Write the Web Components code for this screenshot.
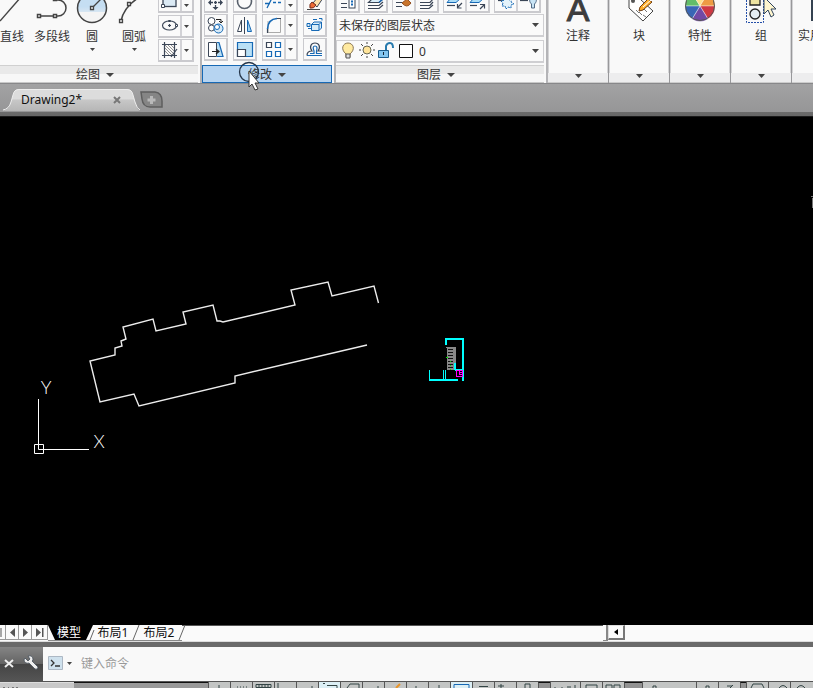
<!DOCTYPE html>
<html lang="zh-CN">
<head>
<meta charset="utf-8">
<title>Drawing2</title>
<style>
html,body{margin:0;height:100%}
body{background:#000;overflow:hidden;font:12px/16px "Noto Sans","Noto Sans CJK SC",sans-serif;color:#333}
</style>
</head>
<body>
<cad-app></cad-app>
<script>
const define=(name,html,setup)=>{
  const t=document.createElement('template');
  t.innerHTML='<style>*{box-sizing:border-box}svg{display:block}button{font:inherit;color:inherit;border:0;padding:0;margin:0;background:none}</style>'+html;
  customElements.define(name,class extends HTMLElement{
    constructor(){super();this.attachShadow({mode:'open'}).append(t.content.cloneNode(true));}
    connectedCallback(){if(setup)setup(this,this.shadowRoot);}
  });
};
const caret=(w,h)=>`<svg width="${w}" height="${h}" viewBox="0 0 ${w} ${h}" aria-hidden="true"><path d="M0 0H${w}L${w/2} ${h}Z" fill="#444"/></svg>`;
const S='fill="none" stroke="#3b4657" stroke-width="1.2"';
const B='fill="none" stroke="#1769b5" stroke-width="1.3"';
const icons={
line:'<path d="M0 21L21 -3" fill="none" stroke="#444" stroke-width="1.4"/>',
polyline:'<g fill="none" stroke="#444" stroke-width="1.5"><path d="M23 0H25A8 8 0 0 1 25 16H7"/><g fill="#fff"><path d="M4.500 14.500h3v3h-3zM20.500 14.500h3v3h-3zM20.500 -2.500h3v3h-3z"/></g></g>',
circle:'<defs><linearGradient id="g" x2="0" y2="1"><stop offset=".45" stop-color="#c5def2"/><stop offset=".62" stop-color="#d5e5f2"/><stop offset=".64" stop-color="#f4f4f4"/></linearGradient></defs><circle cx="16" cy="8" r="14.5" fill="url(#g)" stroke="#444" stroke-width="1.5"/><path d="M16 8L26 -2" stroke="#444" stroke-width="1.3"/><path d="M14.500 6.500h3v3h-3z" fill="#fff" stroke="#444" stroke-width="1.3"/>',
arc:'<path d="M3 21Q6 6 22 -3" fill="none" stroke="#444" stroke-width="1.5"/><path d="M1.500 19.500h3v3h-3zM9.500 2.500h3v3h-3z" fill="#fff" stroke="#444" stroke-width="1.3"/>',
rect:`<rect x="4" y="-3" width="13" height="9.500" fill="#dbeaf5" stroke="#3b4657" stroke-width="1.3"/><path d="M2.500 4.500h3v3h-3z" fill="#fff" stroke="#3b4657"/>`,
ellipse:`<ellipse cx="10.500" cy="9.500" rx="7" ry="4.500" ${S}/><path d="M9 9.500h3M10.500 8v3" ${S}/><path d="M16.500 8.500h2v2h-2zM9.500 4.500h2v1h-2z" fill="#fff" stroke="#3b4657"/>`,
hatch:`<path d="M5.500 2V18M15.500 2V18M3 4.500H18M3 15.500H18" ${S}/><path d="M6 5L15 14M9 5L15 11M6 8L13 15M6 11L10 15M12 5L15 8" stroke="#777" stroke-width=".8"/><path d="M12 17L18 9" ${S}/>`,
move:'<path d="M10.500 -3V9M5 2.500H17" stroke="#3b4657" stroke-width="1.3" stroke-dasharray="3 1"/><path d="M3 2.500l3-3v6zM18 2.500l-3-3v6zM10.500 10L7.500 7h6z" fill="#3b4657"/>',
rotate:'<circle cx="10.500" cy="1.500" r="7" fill="none" stroke="#59616c" stroke-width="1.6"/>',
trim:'<path d="M4 8L10 -4M2 3.500h5" fill="none" stroke="#1769b5" stroke-width="1.3"/><path d="M10 2.500h8" stroke="#1769b5" stroke-width="1.3" stroke-dasharray="3 2"/>',
erase:'<path d="M9 3L14 -3L19 -2L13 7Z" fill="#ffe1a8" stroke="#3b4657"/><path d="M6 8Q5 4 8 2L12 5Q10 9 6 8Z" fill="#ef6b33" stroke="#732d1d"/><path d="M3 9.500h13" stroke="#444"/>',
copy:'<circle cx="6.500" cy="6" r="3.500" fill="#fff" stroke="#3b4657"/><circle cx="6.500" cy="13" r="3" fill="#fff" stroke="#3b4657"/><circle cx="13.500" cy="13.500" r="4.500" fill="#d5e9f7" stroke="#1769b5"/><circle cx="12" cy="12" r="2.500" fill="#fff" stroke="#1769b5"/><path d="M11 4.500h5V7M14 6l2 2 2-2" fill="none" stroke="#222"/>',
mirror:'<path d="M7.500 5V16.500H3.500Z" fill="#fff" stroke="#3b4657"/><path d="M13.500 5V16.500H17.500Z" fill="#9ed1ef" stroke="#1769b5"/><path d="M10.500 2V19" stroke="#3b4657"/>',
fillet:'<path d="M5 6V17.500H17.500V4" fill="none" stroke="#aaa"/><path d="M4.500 18V14M14 3.500H18" stroke="#3b4657" stroke-width="1.2"/><path d="M4.500 14Q5 4 14 3.500" fill="none" stroke="#1769b5" stroke-width="1.6"/>',
explode:'<g fill="#d9edf8" stroke="#1769b5"><path d="M7.500 9.500L10 7H17.500V13L15 15.500H7.500ZM7.500 9.500H15V15.500M15 9.500L17.500 7M3 8.500h3v3H3zM4 13.500h3M9 4.500h4M15 3.500h3v2"/></g>',
stretch:'<path d="M11.500 3.500V17.500H3.500V3.500Z" fill="#fff" stroke="#3b4657"/><path d="M12 3.500H14L18 17.500H12" fill="#b8def4" stroke="#1769b5" stroke-width="1.2"/><path d="M7 12.500h6M11 10l3 2.500-3 2.500" fill="none" stroke="#222" stroke-width="1.2"/>',
scale:'<path d="M3.500 3.500H18.500V17.500H3.500Z" fill="#b9e0f5" stroke="#1769b5" stroke-width="1.2"/><path d="M3.500 10.500H11.500V17.500H3.500Z" fill="#fff" stroke="#3b4657" stroke-width="1.2"/>',
array:'<g fill="#fff" stroke-width="1.2"><path d="M3.500 3.500h5v5h-5z" stroke="#3b4657"/><path d="M12.500 3.500h5v5h-5zM3.500 12.500h5v5h-5zM12.500 12.500h5v5h-5z" stroke="#1769b5"/></g>',
offset:'<path d="M3 16.500C3 13 5 12 8 12C5 8 7 4 11 4S17 8 14 12H18" fill="none" stroke="#3b4657" stroke-width="1.2"/><path d="M3 16.500H18M6 14.500H10V12Q8 7 11 7T12.500 12V14.500H18" fill="none" stroke="#1769b5" stroke-width="1.2"/>',
lprops:`<path d="M3 -1h7M4 3.500h6M4 7.500h6" ${S}/><rect x="12" y="-3" width="6" height="11" fill="#fff" stroke="#3b4657"/><path d="M14 1.500h2M14 4.500h2" stroke="#1769b5" stroke-width="2"/>`,
layers:`<path d="M7 -1H18L14 2.500H3.500Z" fill="#d7ecf8" ${S}/><path d="M3 5.500H14L18 2M3 8.500H14L18 5" ${S}/><path d="M7 -1H18L14 2.500" ${B}/>`,
lbrush:`<path d="M4 -1H10M3 2.500h6M3 6.500h6" ${S}/><path d="M9 3L14 -1L18 3Q14 9 9 3Z" fill="#c9752c" stroke="#945123"/>`,
lgrey:`<path d="M7 -1H17L14 2.500H4M4 5.500H14L17 2M4 8.500H13L17 5" ${S}/>`,
ldown:`<path d="M7 -2H17L12 2.500H3Z" fill="#a9dcf6" stroke="#1769b5"/><path d="M3 5.500H11" ${S}/><path d="M18 3l-4 4M13.500 4v4h4" ${S}/>`,
lup:`<path d="M7 -2H17L12 2.500H3Z" fill="#a9dcf6" stroke="#1769b5"/><path d="M3 5.500H10" ${S}/><path d="M13 9l4-4M13 4.500h4.500v4" ${S}/>`,
freeze:`<path d="M3 .5h6" ${S}/><path d="M12 -3l2 3 3-1-1 3 3 2-3 1v3l-3-1-2 2-1-3-3 0 1-3-2-2 4-1z" fill="#e4f3fb" stroke="#1769b5" stroke-dasharray="2 1"/>`,
loff:`<path d="M2 .5h8" ${S}/><path d="M13.500 8V4C10 1 12 -4 15 -4S20 1 16.500 4V8Z" fill="#c8e4f5" stroke="#536b85"/>`
};
define('tool-icon',`<style>:host{display:block;flex:none}svg{overflow:hidden}</style><svg aria-hidden="true"></svg>`,(h,r)=>{
 const w=h.getAttribute('w')||22,g=h.getAttribute('h')||22,s=r.querySelector('svg');
 s.setAttribute('width',w);s.setAttribute('height',g);s.setAttribute('viewBox',`0 0 ${w} ${g}`);s.innerHTML=icons[h.getAttribute('name')]||'';
});
define('tool-button',`<style>:host{display:block}div{display:flex;height:23px;border:1px solid #cacace;background:#fafafa;border-width:1px 2px 2px 1px}:host([top]) div{height:13px;border-top:0}button{height:100%;width:21px;overflow:hidden}.more{display:none;width:11px;border-left:2px solid #d2d2d6;place-items:center}:host([split]) .more{display:grid}:host([pair]) .more{width:23px;display:block}</style><div><button class="main"><tool-icon></tool-icon></button><button class="more" aria-label="更多">${caret(5,3)}</button></div>`,(h,r)=>{
 const n=h.getAttribute('name'),g=h.hasAttribute('top')?11:20;
 const ic=k=>`<tool-icon name="${k}" w="21" h="${g}"></tool-icon>`;
 const m=r.querySelector('.main');m.innerHTML=ic(n);m.setAttribute('aria-label',n);
 if(h.hasAttribute('pair'))r.querySelector('.more').innerHTML=ic(h.getAttribute('pair'));
});
define('large-tool',`<style>:host{display:block;flex:none}button{display:flex;flex-direction:column;align-items:center;width:100%;height:56px;white-space:nowrap}span{margin-top:5px;height:16px}.c{margin-top:3px;display:none}:host([menu]) .c{display:block}</style><button><tool-icon></tool-icon><span><slot></slot></span><i class="c">${caret(5,3)}</i></button>`,(h,r)=>{
 r.querySelector('button').firstElementChild.outerHTML=`<tool-icon name="${h.getAttribute('name')}" w="${h.getAttribute('w')||32}" h="24"></tool-icon>`;
});
define('ribbon-panel',`<style>:host{display:flex;flex-direction:column;height:83px;flex:none;padding-right:2px;border-right:2px solid #b4b4b7}.body{height:65px;overflow:hidden}.title{height:18px;width:100%;padding:2px 8px 0 0;display:flex;align-items:center;justify-content:center;gap:6px;border-top:1px solid #d0d0d0;border-bottom:1px solid #c8c8c8;background:linear-gradient(#e9e9e9 50%,#f7f7f7 50%)}:host([active]) .title{padding-right:0;border:1px solid #1769b5;background:#b6d4f1}</style><div class="body"><slot></slot></div><button class="title"><slot name="title"></slot>${caret(8,4)}</button>`);
define('compact-panel',`<style>:host{display:flex;width:61px;flex:none;height:83px;border-right:1px solid #98989b;box-shadow:inset -1px 0 #d4d4d6,inset 1px 0 #d4d4d6}button{width:100%;display:flex;flex-direction:column;align-items:center;white-space:nowrap}svg{flex:none;overflow:hidden}span{margin-top:4px}.foot{margin-top:auto;align-self:stretch;height:10px;background:#ededee;border-bottom:1px solid #ccc;display:flex;justify-content:center;padding-top:1px}</style><button><slot name="icon"></slot><span><slot></slot></span><div class="foot">${caret(7,4)}</div></button>`);
define('layer-select',`<style>:host{display:flex;align-items:center;height:23px;border:1px solid #cfcfd2;border-bottom-width:2px;background:#fafafa;padding-left:1px;padding-right:4px}select{appearance:none;border:0;background:none;font:inherit;color:#333;padding:2px 0 0 1px;margin:0;flex:1;min-width:0;height:20px;outline:0}svg{flex:none}</style><slot></slot><select></select>${caret(7,4)}`,(h,r)=>{
 const s=r.querySelector('select');s.setAttribute('aria-label',h.getAttribute('label'));s.add(new Option(h.getAttribute('value')));
});
define('cad-ribbon',`<style>
:host{display:flex;height:84px;background:#f9f9f9;border-bottom:1px solid #88888a;overflow:hidden;flex:none}
.draw{display:flex;width:198px}.grid{display:grid;gap:1px 5px;align-content:start}.draw .grid{margin-left:auto;margin-right:4px;width:36px}
.mod{grid-template-columns:24px 24px 36px 24px;padding:0 0 0 2px;width:130px}
.layer{width:208px}.row{display:flex;gap:4px;height:14px}
.row tool-button{width:24px}.row tool-button[pair]{width:47px}layer-select+layer-select{margin-top:3px}
large-tool{width:48px}.l{width:24px}.p{width:56px}.c{width:24px}
</style>
<ribbon-panel><span slot="title">绘图</span><div class="draw">
<large-tool class="l" name="line" w="24">直线</large-tool><large-tool class="p" name="polyline" w="38">多段线</large-tool><large-tool class="c" name="circle" menu>圆</large-tool><large-tool style="width:60px" name="arc" w="32" menu>圆弧</large-tool>
<div class="grid" style="margin-left:-6px"><tool-button top split name="rect"></tool-button><tool-button split name="ellipse" style="margin-top:1px"></tool-button><tool-button split name="hatch"></tool-button></div></div></ribbon-panel>
<ribbon-panel active><span slot="title">修改</span><div class="grid mod">
<tool-button top name="move"></tool-button><tool-button top name="rotate"></tool-button><tool-button top split name="trim"></tool-button><tool-button top name="erase"></tool-button>
<tool-button name="copy"></tool-button><tool-button name="mirror"></tool-button><tool-button split name="fillet"></tool-button><tool-button name="explode"></tool-button>
<tool-button name="stretch"></tool-button><tool-button name="scale"></tool-button><tool-button split name="array"></tool-button><tool-button name="offset"></tool-button></div></ribbon-panel>
<ribbon-panel><span slot="title">图层</span><div class="layer"><div class="row"><tool-button top name="lprops"></tool-button><tool-button top name="layers"></tool-button><tool-button top name="lbrush" pair="lgrey"></tool-button><tool-button top name="ldown" pair="lup"></tool-button><tool-button top name="freeze" pair="loff"></tool-button></div>
<layer-select label="图层状态" value="未保存的图层状态"></layer-select>
<layer-select label="图层" value="0"><svg width="80" height="20" viewBox="0 0 80 20" aria-hidden="true"><path d="M8 13C2 8 5 2 10 2S18 8 12 13V16H8Z" fill="#ffeaa0" stroke="#8a7753"/><path d="M8 13h4v4H8z" fill="#ddd" stroke="#555"/><circle cx="29" cy="9" r="4" fill="#ffe49a" stroke="#665"/><path d="M29 1v2M29 15v2M21 9h2M35 9h2M23 3l2 2M33 13l2 2M35 3l-2 2M23 15l2-2" stroke="#444"/><path d="M40.500 9.500h10v7h-10z" fill="#83c5ef" stroke="#1a5b8b"/><path d="M48 9V5Q49 2 52 2T55 7" fill="none" stroke="#287aad" stroke-width="2"/><path d="M45.500 11v3" stroke="#123"/><path d="M61.500 3.500h13v13h-13z" fill="#fff" stroke="#111"/></svg></layer-select></div></ribbon-panel>
<compact-panel><svg slot="icon" width="32" height="24" viewBox="0 0 32 24"><text x="16" y="21" text-anchor="middle" font-family="Liberation Sans,sans-serif" font-size="34" fill="#3d3d3d" stroke="#3d3d3d">A</text></svg>注释</compact-panel>
<compact-panel><svg slot="icon" width="32" height="24" viewBox="0 0 32 24"><path d="M6 -1H17L30 11L20 21L6 8Z" fill="#fff" stroke="#444"/><circle cx="10" cy="1" r="2" fill="#555"/><path d="M13 10l3 3M16 12l3 3M20 15l3 2M21 9l3 3" stroke="#777"/><path d="M17 7L25 -1L29 2L20 10L16 11Z" fill="#ffb02d" stroke="#6f3d13"/><path d="M20 7L28 0" stroke="#fff"/></svg>块</compact-panel>
<compact-panel><svg slot="icon" width="32" height="24" viewBox="0 0 32 24"><g stroke="#fff" stroke-width=".4"><path d="M16 6L1 6A15 15 0 0 1 8 -7Z" fill="#62bd69"/><path d="M16 6L8 -7A15 15 0 0 1 24 -7Z" fill="#ffe38c"/><path d="M16 6L24 -7A15 15 0 0 1 31 6Z" fill="#ee9b43"/><path d="M16 6H31A15 15 0 0 1 24 19Z" fill="#cf3943"/><path d="M16 6L24 19A15 15 0 0 1 8 19Z" fill="#7249a5"/><path d="M16 6L8 19A15 15 0 0 1 1 6Z" fill="#3966b5"/></g><circle cx="16" cy="6" r="14.500" fill="none" stroke="#555"/></svg>特性</compact-panel>
<compact-panel><svg slot="icon" width="32" height="24" viewBox="0 0 32 24"><path d="M1.500 0V22.500H18.500V0" fill="none" stroke="#244fa8" stroke-dasharray="2 1"/><path d="M5 -5h10V5H5z" fill="#eee3a0" stroke="#222" stroke-width="1.300"/><circle cx="10" cy="14" r="5" fill="#e5edf2" stroke="#222" stroke-width="1.300"/><path d="M19 -3V14L23 10L26 17L29 15L26 9H31Z" fill="#fff6cf" stroke="#30445c"/></svg>组</compact-panel>
<compact-panel><svg slot="icon" width="32" height="24" viewBox="0 0 32 24"><path d="M5 0h20v21H5z" fill="#344250"/></svg>实用工具</compact-panel>`);
define('file-tabs',`<style>:host{display:flex;height:33px;flex:none;padding:5px 0 0 2px;background:linear-gradient(#a2a2a3,#969697 28px,#6b6b6b 28px,#666 32px,#1a1a1a 32px);align-items:flex-start}.tab{position:relative;display:flex;width:138px;height:22px;align-items:center;padding-left:19px;color:#111}.bg{position:absolute;inset:0;z-index:-1}.tab{z-index:0}.x{margin-left:auto;margin-right:19px}.n{font-size:12px;line-height:20px}.add{margin-top:2px}</style>
<div class="tab"><svg class="bg" width="138" height="22" viewBox="0 0 138 22"><defs><linearGradient id="t" x2="0" y2="1"><stop offset=".45" stop-color="#dcdcdc"/><stop offset=".5" stop-color="#c7c7c7"/><stop offset="1" stop-color="#b6b6b6"/></linearGradient></defs><path d="M0 22Q7 21 9 13L11 6Q12 0 17 0H125Q130 0 131 6L133 13Q135 21 138 22Z" fill="url(#t)"/><path d="M1 21Q7 20 9 13L11 6Q12 .5 17 .5H125Q130 .5 131 6L133 13Q135 20 138 21" fill="none" stroke="#eee"/></svg><button class="n">Drawing2*</button><button class="x" aria-label="关闭"><svg width="8" height="8" viewBox="0 0 8 8"><path d="M1 1l6 6M7 1L1 7" stroke="#777" stroke-width="2"/></svg></button></div>
<button class="add" aria-label="新建"><svg width="24" height="18" viewBox="0 0 24 18"><path d="M1 1H15Q22 2 22 10V16H10Q3 16 2 8Z" fill="#858585" stroke="#5e5e5e" stroke-width="1.500"/><path d="M11.500 5v8M7.500 9h8" stroke="#b9b9b9" stroke-width="3"/></svg></button>`);
define('drawing-canvas',`<style>:host{display:block;flex:1;min-height:0;background:#000;overflow:hidden}text{font:300 18px Lato,"Noto Sans",sans-serif;fill:#fff}</style>
<svg width="813" height="508" viewBox="0 117 813 508" role="img" aria-label="模型空间"><path d="M378.500 303L374 286L332 296L328 282L291 290L295 305L223 322L220 321H217L213 305L183 312L186 324L156 331L153 319L123 327L126 339L121 341L122 346L115 348V355L90 361L100 402L134 394L139 406L235 383V376L367 345" fill="none" stroke="#ececec" stroke-width="1.400"/>
<path d="M38.500 399V449.500H89M34.500 444.500h9v9h-9z" fill="none" stroke="#fff"/><text x="46" y="394" text-anchor="middle">Y</text><text x="99" y="448" text-anchor="middle">X</text>
<g shape-rendering="crispEdges"><path d="M446 345V339H463V381M429 380H458" fill="none" stroke="#0ff" stroke-width="2"/><path d="M429.500 370V380M443.500 370V380M445.500 370V380" stroke="#0ff"/><path d="M446 347h10v16h-2v7h-7V348h-1z" fill="#888"/><path d="M448 349.500h5M448 352.500h5M448 355.500h5M448 358.500h5M448 361.500h5M448 364.500h5M448 367.500h5" stroke="#111"/><path d="M455 363V370M455 369.500h7" fill="none" stroke="#0ff" stroke-width="2"/><path d="M446 357h2v1h-2zM450 361h1v1h-1zM450 365h1v1h-1zM450 369h1v1h-1z" fill="#0d0"/><path d="M456.500 370.500h6v6h-6zM459.500 371v3.500h3M460 372.500h3" fill="#000" stroke="#f0f"/></g>
<path d="M811 196.500h2M812.500 198V208" stroke="#777"/></svg>`);
define('layout-tabs',`<style>:host{display:flex;height:17px;flex:none;background:#fafafa;border-bottom:1px solid #ddd;color:#111}.nav{display:flex}.nav button{width:13px;height:15px;border-right:1px solid #999;border-bottom:1px solid #999;display:grid;place-items:center}.nav button:first-child{width:6px;overflow:hidden}.nav button:last-child{width:16px}.tab{height:16px;position:relative;z-index:0;border-bottom:1px solid #888}.tab svg{position:absolute;inset:0;z-index:-1;overflow:visible}.m{width:42px;color:#fff}.b{width:46px}.line{flex:1;display:flex;justify-content:flex-end}.fill{border-top:1px solid #555;flex:1}.split{width:5px;border-right:2px solid #888;border-bottom:1px solid #888}.left{width:17px;height:15px;border:1px solid #ddd;border-right:2px solid #777;border-bottom:2px solid #777;display:grid;place-items:center}.rest{width:188px}</style>
<div class="nav"><button aria-label="首页"><svg width="5" height="9"><path d="M1 0v9" stroke="#555"/></svg></button><button aria-label="上一个"><svg width="5" height="9"><path d="M5 0v9L0 4.500Z" fill="#555"/></svg></button><button aria-label="下一个"><svg width="5" height="9"><path d="M0 0v9l5-4.500Z" fill="#555"/></svg></button><button aria-label="末页"><svg width="8" height="9"><path d="M0 0v9l5-4.500ZM6 0h1.500v9H6z" fill="#555"/></svg></button></div>
<button class="tab m"><svg width="42" height="15"><path d="M0 0H45L38 15H7Z" fill="#000"/></svg>模型</button><button class="tab b"><svg width="46" height="15"><path d="M0 15L4 5M43 15L49 0" stroke="#666"/></svg>布局1</button><button class="tab b"><svg width="46" height="15"><path d="M43 15L49 0" stroke="#666"/></svg>布局2</button>
<div class="line"><div class="fill"></div><div class="split"></div><button class="left" aria-label="向左滚动"><svg width="4" height="6"><path d="M4 0v6L0 3Z" fill="#000"/></svg></button></div><div class="rest"></div>`);
define('command-line',`<style>:host{display:flex;height:39px;flex:none;border-top:5px solid #6a6a6a;background:#f9f9f9;padding-bottom:2px}.side{width:43px;margin-bottom:-2px;background:linear-gradient(#858585,#636363 50%,#444 50%,#555);display:flex;align-items:center;gap:9px;padding:0 0 2px 4px}.prompt{display:flex;align-items:center;gap:4px;margin-left:5px}input{border:0;outline:0;background:none;font:12px "Noto Sans","Noto Sans CJK SC",sans-serif;flex:1;min-width:0;padding:0;margin-left:9px}input::placeholder{color:#999;opacity:1}</style>
<div class="side"><button aria-label="关闭"><svg width="10" height="9" viewBox="0 0 10 9"><path d="M1 1l8 7M9 1L1 8" stroke="#eee" stroke-width="2"/></svg></button><button aria-label="自定义"><svg width="16" height="16" viewBox="0 0 16 16"><path d="M2 3L5 6L7 4L5 1Q10 0 10 5L9 6L15 12Q15 15 12 14L6 8Q2 9 1 5Z" fill="#eee" stroke="#394552" stroke-width=".7"/></svg></button></div>
<button class="prompt" aria-label="最近使用的命令"><svg width="15" height="14" viewBox="0 0 15 14"><path d="M.5 .5h14v13H.5z" fill="#cfe1ed" stroke="#adb8c4"/><path d="M3 4l3 3-3 3M7 10h5" fill="none" stroke="#333" stroke-width="1.300"/></svg>${caret(5,3)}</button><input aria-label="命令" placeholder="键入命令">`);
define('status-bar',`<style>:host{display:flex;height:7px;flex:none;border-top:1px solid #555;background:#999;overflow:hidden}.coord{width:74px;background:#c9c9c9;border-top:1px solid #ddd;flex:none}.space{width:134px;background:#999;border-top:1px solid #111;flex:none}.cells{display:flex;flex:none}button{height:6px;border-left:1px solid #555;background:#c3c5c4;overflow:hidden;flex:none}.on{background:#dceff5}.dark{background:#929292;border-top:1px solid #111}</style><div class="coord"><svg width="74" height="6"><path d="M3 5h2M8 5h1M12 5h2M17 4v2" stroke="#222"/></svg></div><div class="space"></div><div class="cells"></div>`,(h,r)=>{
 const w=[22,22,22,22,22,22,22,22,22,22,22,22,22,22,22,12,30,22,22,18,54,22,22,6,22,22,23];
 const p=['M10 3v3','M6 5h1M9 5h1M12 5h1M15 5h1','M3 2.500h15v3H3zM6 2v3M9 2v3M12 2v3M15 2v3','M3 1v5','M14 5h2','M4 1.500h2M8 3.500h10v3','M6 6l3-4h9v4','M14 5h2','M15 2l-4 4','M9 4v2','M10 3v3','M3 2.500h15v4H3z','M6 4.500h9','M6 2v4M3 4h6','M8 6V2h5v4','','M4 5v1M11 5v1M17 4v2M19 4v2M24 3v3','M5 6V3h11v3','M3 6V3h6v3M11 6V3h6v3','','M10 6V4h3v2','M9 6V4h3v2','M8 4h5M14 3l-3 3','','M4 6l2-4h9l2 4','M10 6q4-5 8 0','M6 6q4-5 8 0'];
 r.querySelector('.cells').innerHTML=w.map((x,i)=>`<button aria-label="状态 ${i+1}" class="${[5,11].includes(i)?'on':[15,19,23].includes(i)?'dark':''}" style="width:${x}px"><svg width="${x}" height="6"><path d="${p[i]}" fill="none" stroke="${i==8?'#e99427':i==11?'#1769b5':'#344'}" stroke-width="${i==8?2:1}"/></svg></button>`).join('');
});
define('mouse-pointer',`<style>:host{position:absolute;left:238px;top:61px;pointer-events:none}</style><svg width="26" height="32" viewBox="0 0 26 32"><circle cx="11" cy="11" r="9.500" fill="none" stroke="#26364a" stroke-width="1.300"/><path d="M11 10V26L14 23L17 29L20 28L17 22H21Z" fill="#fff" stroke="#333"/></svg>`);
define('cad-app',`<style>:host{display:flex;flex-direction:column;height:100vh;overflow:hidden;position:relative}</style><cad-ribbon></cad-ribbon><file-tabs></file-tabs><drawing-canvas></drawing-canvas><layout-tabs></layout-tabs><command-line></command-line><status-bar></status-bar><mouse-pointer></mouse-pointer>`);
</script>
</body>
</html>
